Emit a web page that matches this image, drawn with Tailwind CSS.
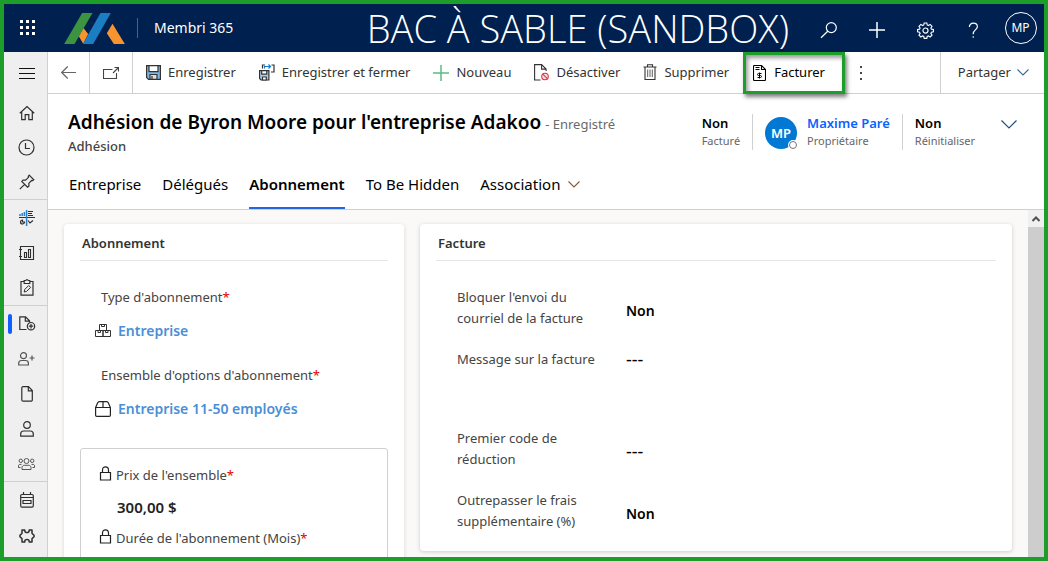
<!DOCTYPE html>
<html lang="fr">
<head>
<meta charset="utf-8">
<meta name="viewport" content="width=device-width, initial-scale=1">
<title>Membri 365</title>
<script src="https://cdn.jsdelivr.net/npm/@tailwindcss/browser@4"></script>
</head>
<body class="flex h-screen flex-col overflow-hidden border-4 border-[#1d9e2a] bg-white font-['Segoe_UI','Noto_Sans',sans-serif] text-[13px] text-[#333333]">

<header class="flex h-12 shrink-0 items-center bg-[#00204f] text-white">
  <button class="flex h-12 w-12 items-center justify-center" aria-label="Applications">
    <svg width="16" height="16" viewBox="0 0 16 16" fill="currentColor"><path d="M0 0h3v3H0zM6 0h3v3H6zM12 0h3v3h-3zM0 6h3v3H0zM6 6h3v3H6zM12 6h3v3h-3zM0 12h3v3H0zM6 12h3v3H6zM12 12h3v3h-3z"/></svg>
  </button>
  <a href="#" class="ml-3" aria-label="Membri">
    <svg width="61" height="31" viewBox="192 37 182 93"><path fill="#f7942e" d="M236 107l14-25 14 18-15 29zM337 69l-17 29 21 32h33z"/><path fill="#3d9440" d="M246 37h31l-54 93h-31z"/><path fill="#1c7ec2" d="M301 37h31l-53 93h-31z"/></svg>
  </a>
  <span class="ml-3 h-5 w-px bg-[#4a6288]"></span>
  <span class="ml-4 text-sm whitespace-nowrap">Membri 365</span>
  <span class="min-w-0 flex-1 pr-4 text-right font-['Segoe_UI_Light','Open_Sans',sans-serif] text-[38px] leading-[48px] font-light whitespace-nowrap">BAC À SABLE (SANDBOX)</span>
  <button class="flex h-12 w-12 items-center justify-center" aria-label="Rechercher"><svg class="mt-1" width="18" height="18" viewBox="0 0 18 18" fill="none" stroke="currentColor" stroke-width="1.2"><circle cx="11.3" cy="6.6" r="5"/><path d="M7.7 10.2L1 16.8"/></svg></button>
  <button class="flex h-12 w-12 items-center justify-center" aria-label="Ajouter"><svg class="mt-1" width="16" height="16" viewBox="0 0 16 16" stroke="currentColor" stroke-width="1.5"><path d="M8 0v16M0 8h16"/></svg></button>
  <button class="flex h-12 w-12 items-center justify-center" aria-label="Paramètres"><svg class="mt-1" width="17" height="17" viewBox="0 0 18 18" fill="none" stroke="currentColor" stroke-width="1.2"><path d="M7.6 1h2.8l.4 2.1 1.3.6 1.8-1.2 2 2-1.2 1.8.6 1.3 2.1.4v2.4l-2.1.4-.6 1.3 1.2 1.8-2 2-1.8-1.2-1.3.6-.4 2.1H7.6l-.4-2.1-1.3-.6-1.8 1.2-2-2 1.2-1.8-.6-1.3L.6 10.400V8l2.100-.4.600-1.300L2.100 4.500l2-2 1.800 1.200 1.300-.6z"/><circle cx="9" cy="9.100" r="2.700"/></svg></button>
  <button class="flex h-12 w-12 items-center justify-center" aria-label="Aide"><svg class="mt-1" width="11" height="17" viewBox="0 0 12 18" fill="none" stroke="currentColor" stroke-width="1.300"><path d="M1.500 5.200C1.500 2.700 3.300 1 5.800 1s4.400 1.500 4.400 3.800c0 3.400-4.500 3.800-4.500 7.700v.5"/><path d="M5.700 15.200v1.800"/></svg></button>
  <button class="flex h-12 w-[47px] items-center justify-center" aria-label="Compte"><span class="flex h-8 w-8 items-center justify-center rounded-full border border-white text-xs">MP</span></button>
</header>

<div class="flex min-h-0 flex-1">
  <nav class="flex w-11 shrink-0 flex-col border-r border-[#d2d0ce] bg-[#efefef] text-[#2f2f2f]" aria-label="Navigation">
    <button class="flex h-[44px] shrink-0 items-center justify-center pb-0.5 pl-0.5" aria-label="Menu"><svg width="16" height="11" viewBox="0 0 16 11" stroke="#111" stroke-width="1"><path d="M0 .5h16M0 5.500h16M0 10.500h16"/></svg></button>
    <div class="border-b border-[#d2d0ce] pl-0.5">
      <a href="#" class="flex h-[34px] items-center justify-center" aria-label="Accueil"><svg width="16" height="16" viewBox="0 0 16 16" fill="none" stroke="currentColor" stroke-width="1.200"><path d="M.8 8.200L8 1.500l7.200 6.700M2.700 6.800v7.900h3.500V9.600h3.600v5.100h3.500V6.800"/></svg></a>
      <a href="#" class="flex h-[35px] items-center justify-center" aria-label="Récents"><svg width="17" height="17" viewBox="0 0 17 17" fill="none" stroke="currentColor" stroke-width="1.200"><circle cx="8.500" cy="8.500" r="7.500"/><path d="M7.500 4v5.500H12"/></svg></a>
      <a href="#" class="flex h-[34px] items-center justify-center" aria-label="Épinglés"><svg width="16" height="16" viewBox="0 0 16 16" fill="none" stroke="currentColor" stroke-width="1.200"><path d="M10.200 1.200l4.600 4.600-1.200.9-1-.2-2.800 2.900.2 2.600-1.500 1.200L2.800 7.500 4 6l2.600.2 2.900-2.800-.2-1zM5.600 10.400L.8 15.200"/></svg></a>
    </div>
    <div class="border-b border-[#d2d0ce] pl-0.5">
      <a href="#" class="flex h-[35px] items-center justify-center" aria-label="Tableaux de bord"><svg width="16" height="16" viewBox="0 0 16 16" fill="none" stroke="currentColor" stroke-width="1.200"><path d="M0 7.500h16M9 1.500h5M9 3.500h4M9 5.500h5M3.500 10a2 2 0 1 0 2 2h-2zM9 10.500l2 2.500 3-2.500"/><path stroke="#2f7fc4" stroke-width="1.500" d="M1 6V4M3.200 6V3M5.400 6V2M7.600 0v16"/></svg></a>
      <a href="#" class="flex h-[35px] items-center justify-center" aria-label="Rapports"><svg width="16" height="16" viewBox="0 0 16 16" fill="none" stroke="currentColor" stroke-width="1.100"><path d="M1.500 1.500h13v13h-13zM0 4.500h3M0 11.500h3M5.500 7.500h2v5h-2zM9.500 4.500h2v8h-2z"/></svg></a>
      <a href="#" class="flex h-[35px] items-center justify-center" aria-label="Formulaires"><svg width="14" height="17" viewBox="0 0 14 17" fill="none" stroke="currentColor" stroke-width="1.200"><path d="M4 2.500H1v13.700h12V2.500h-3M4.200 4.500v-3h1.500L7 .6l1.300.9h1.500v3z"/><path stroke-width="1" d="M4.200 13l.5-2.500 4-4 1.900 1.900-4 4z"/></svg></a>
    </div>
    <div class="border-b border-[#d2d0ce] pl-0.5">
      <a href="#" aria-current="page" class="relative flex h-[35px] items-center justify-center" aria-label="Adhésions"><span class="absolute top-2 left-0.5 h-5 w-1 rounded-full bg-[#0b62ff]"></span><svg class="ml-px" width="17" height="15" viewBox="0 0 17 15" fill="none" stroke="currentColor" stroke-width="1.200"><path d="M7.500 13.500h-6.700V.8h5.700l4 4v1.500M6.300.8v4.400h4.200"/><circle cx="12" cy="10.200" r="3.700"/><path d="M12 8v4.400M9.800 10.200h4.400"/></svg></a>
      <a href="#" class="flex h-[35px] items-center justify-center" aria-label="Nouveaux membres"><svg width="17" height="14" viewBox="0 0 17 14" fill="none" stroke="#555" stroke-width="1.200"><circle cx="5.500" cy="3.700" r="3"/><path d="M.7 13v-1.700C.7 9.500 2 8.500 3.500 8.500h4c1.500 0 2.900 1 2.900 2.800V13zM14 3.500v5M11.500 6h5"/></svg></a>
      <a href="#" class="flex h-[35px] items-center justify-center" aria-label="Documents"><svg width="12" height="16" viewBox="0 0 12 16" fill="none" stroke="currentColor" stroke-width="1.200"><path d="M2 .7h5.500l3.800 3.800V14a1.200 1.200 0 0 1-1.200 1.200H2A1.200 1.200 0 0 1 .8 14V2A1.200 1.200 0 0 1 2 .7zM7.300.8v4h4"/></svg></a>
      <a href="#" class="flex h-[35px] items-center justify-center" aria-label="Contacts"><svg width="14" height="16" viewBox="0 0 14 16" fill="none" stroke="currentColor" stroke-width="1.200"><circle cx="7" cy="4" r="3.300"/><path d="M.7 15.200V13c0-1.800 1.300-3 3-3h6.600c1.700 0 3 1.200 3 3v2.200z"/></svg></a>
      <a href="#" class="flex h-[35px] items-center justify-center" aria-label="Groupes"><svg width="17" height="12" viewBox="0 0 17 12" fill="none" stroke="#555" stroke-width="1"><circle cx="8.500" cy="3" r="2.500"/><circle cx="2.800" cy="2.800" r="1.700"/><circle cx="14.200" cy="2.800" r="1.700"/><path d="M4 11.500V9.600c0-1.300.9-2.300 2.300-2.300h4.400c1.400 0 2.300 1 2.300 2.300v1.900zM3.500 6.400H2C1 6.400.5 7 .5 8v1.500h2M13.500 6.400H15c1 0 1.500.6 1.500 1.600v1.500h-2"/></svg></a>
    </div>
    <a href="#" class="flex h-[36px] shrink-0 items-center justify-center pl-0.5" aria-label="Calendrier"><svg width="14" height="16" viewBox="0 0 14 16" fill="none" stroke="currentColor" stroke-width="1.200"><path d="M2 2.500h10c.8 0 1.300.5 1.300 1.300v10c0 .9-.5 1.400-1.300 1.400H2c-.8 0-1.300-.5-1.300-1.400v-10C.7 3 1.200 2.500 2 2.500zM3.500 0v2.500M10.500 0v2.500M.7 5.500h12.600M3 8.500h8v3H3z"/></svg></a>
    <a href="#" class="flex h-[35px] shrink-0 items-center justify-center pl-0.5" aria-label="Extensions"><svg width="16" height="14" viewBox="0 0 16 14" fill="none" stroke="currentColor" stroke-width="1.500" stroke-linejoin="round"><path d="M3 1h2.800c-.2 1.800.8 2.600 2.200 2.600s2.400-.8 2.200-2.600H13v3.200c0 .8 2.200 1.300 2.200 2.800S13 9 13 9.800V13h-2.800c.2-1.800-.8-2.600-2.200-2.600s-2.400.8-2.200 2.600H3V9.800C3 9 .8 8.500.8 7S3 5 3 4.200z"/></svg></a>
  </nav>

  <main class="flex min-w-0 flex-1 flex-col">
    <div class="flex h-[42px] shrink-0 items-stretch border-b border-[#d2d0ce] whitespace-nowrap" role="toolbar">
      <button class="flex w-[42px] items-center justify-center border-r border-[#d2d0ce]" aria-label="Retour"><svg width="15" height="13" viewBox="0 0 15 13" fill="none" stroke="#666" stroke-width="1.200"><path d="M6.700.5l-6 6 6 6M.7 6.500H15"/></svg></button>
      <button class="flex w-[43px] items-center justify-center border-r border-[#d2d0ce]" aria-label="Ouvrir"><svg width="16" height="12" viewBox="0 0 16 12" fill="none" stroke="#444" stroke-width="1.100"><path d="M9.500 2.500h-9v9h13V6M10 6l5-5M11.500.5h4v4"/></svg></button>
      <button class="ml-1 flex items-center gap-[7px] px-[9px]"><svg width="15" height="15" viewBox="0 0 15 15" stroke="#333" stroke-width="1.200"><path fill="#7db9e8" d="M.6.6h13.800v13.800H2.600l-2-2z"/><path fill="#fff" d="M3 .6h9v6H3z"/><path fill="#ddd" d="M4 9.500h7v4.900H4zM6 11v3"/></svg>Enregistrer</button>
      <button class="ml-[5px] flex items-center gap-[7px] px-[9px]"><svg width="16" height="17" viewBox="0 0 16 17" fill="none" stroke="#333" stroke-width="1.200"><path fill="#a9cdea" d="M.6 6.600h9.300v9.400H2L.6 14.500z"/><path fill="#fff" d="M2.700 6.600h5.100v3.600H2.700zM3.500 13h3.800v3H3.500z"/><path d="M3.500 4.500V1H6M12.500 1H15v7h-3"/><path stroke="#1779cf" d="M5.500 4.500v-2h6M9.500.5l2 2-2 2"/></svg>Enregistrer et fermer</button>
      <button class="ml-[5px] flex items-center gap-[7px] px-[9px]"><svg width="16" height="16" viewBox="0 0 16 16" stroke="#5dbb83" stroke-width="1.500"><path d="M8 0v16M0 8h16"/></svg>Nouveau</button>
      <button class="ml-[5px] flex items-center gap-[7px] px-[9px]"><svg width="15" height="17" viewBox="0 0 15 17" fill="none" stroke="#333" stroke-width="1.100"><path d="M6.500 16H.6V.6h7l4.500 4.500V7M7.600.6v4.500h4.500"/><g stroke="#dd3444"><circle cx="11" cy="12.500" r="3.300" fill="#fbdfe1"/><path d="M8.800 10.200l4.500 4.500"/></g></svg>Désactiver</button>
      <button class="ml-[5px] flex items-center gap-[7px] px-[9px]"><svg width="14" height="17" viewBox="0 0 14 17" fill="none" stroke="#333" stroke-width="1.100"><path d="M.5 3h13M4.500 3V.8h5V3M2 3v12.500h10V3"/><path stroke-width=".8" d="M4.700 5.500v7.500M7 5.500v7.500M9.300 5.500v7.500"/></svg>Supprimer</button>
      <button class="relative ml-[5px] flex items-center gap-2 pr-5 pl-[10px] text-black"><span class="absolute inset-x-0 top-0 h-[42px] border-[3px] border-[#1d9e2a] shadow-[2px_3px_4px_rgba(0,0,0,0.5),inset_2px_3px_4px_rgba(0,0,0,0.4)]"></span><svg width="13" height="16" viewBox="0 0 13 16" fill="none" stroke="#000" stroke-width="1.100"><path d="M1.500.5h7l4 4v10c0 .7-.4 1-1 1h-10c-.7 0-1-.3-1-1v-13c0-.6.300-1 1-1zM8.500.5v4h4M2.500 2.500h4M2.500 4.500h4"/><path stroke-width="1" d="M8.500 8.500h-3c-1.300 0-1.300 2 0 2h2c1.300 0 1.300 2 0 2h-3M6.500 7.500v6"/></svg><span class="relative">Facturer</span></button>
      <button class="ml-1.5 flex w-5 items-center justify-center" aria-label="Plus de commandes"><svg width="2" height="14" viewBox="0 0 2 14" fill="#444"><path d="M0 0h2v2H0zM0 6h2v2H0zM0 12h2v2H0z"/></svg></button>
      <button class="ml-auto flex items-center gap-1.5 border-l border-[#d2d0ce] pr-[15px] pl-[17px]">Partager<svg width="12" height="7" viewBox="0 0 12 7" fill="none" stroke="#3a6c99" stroke-width="1.100"><path d="M.5.5L6 6 11.500.5"/></svg></button>
    </div>

    <section class="shrink-0 border-b border-[#d2d0ce] bg-white pl-5">
      <div class="flex h-[72px] items-start pt-[15px]">
        <div class="min-w-0 flex-1 whitespace-nowrap">
          <div class="flex items-baseline gap-1"><h1 class="text-[19px] leading-[26px] font-semibold text-black">Adhésion de Byron Moore pour l'entreprise Adakoo</h1><span class="text-[#6a6a6a]">- Enregistré</span></div>
          <p class="text-[13px] leading-[22px] font-medium text-[#444]">Adhésion</p>
        </div>
        <div class="mt-[5px] flex whitespace-nowrap">
          <div class="border-r border-[#d2d0ce] pr-3 leading-[18px]"><p class="font-semibold text-black">Non</p><p class="text-[11px] leading-[18px] text-[#666]">Facturé</p></div>
          <div class="flex gap-2.5 border-r border-[#d2d0ce] px-3 leading-[18px]">
            <span class="relative mt-[3px] flex h-8 w-8 items-center justify-center rounded-full bg-[#0078d4] font-semibold text-white">MP<span class="absolute right-0 bottom-0 h-2 w-2 rounded-full border border-[#777] bg-white ring-1 ring-white"></span></span>
            <div><a href="#" class="block font-semibold text-[#0b62ff]">Maxime Paré</a><p class="text-[11px] leading-[18px] text-[#666]">Propriétaire</p></div>
          </div>
          <div class="pl-3 leading-[18px]"><p class="font-semibold text-black">Non</p><p class="text-[11px] leading-[18px] text-[#666]">Réinitialiser</p></div>
        </div>
        <button class="mt-[11px] mr-[27px] ml-[26px]" aria-label="Développer"><svg width="16" height="9" viewBox="0 0 16 9" fill="none" stroke="#234f80" stroke-width="1.200"><path d="M.5.5L8 8 15.500.5"/></svg></button>
      </div>
      <div class="flex h-[43px] gap-[21px] pl-px text-[15px] whitespace-nowrap text-black" role="tablist">
        <button role="tab" class="border-b-2 border-transparent pb-1">Entreprise</button>
        <button role="tab" class="border-b-2 border-transparent pb-1">Délégués</button>
        <button role="tab" aria-selected="true" class="border-b-2 border-[#2266e3] pb-1 font-semibold">Abonnement</button>
        <button role="tab" class="border-b-2 border-transparent pb-1">To Be Hidden</button>
        <button role="tab" class="flex items-center gap-2 border-b-2 border-transparent pb-1">Association<svg width="12" height="7" viewBox="0 0 12 7" fill="none" stroke="#8a5a30" stroke-width="1.100"><path d="M.5.5L6 6 11.500.5"/></svg></button>
      </div>
    </section>

    <div class="flex min-h-0 flex-1 bg-[#faf9f8]">
      <div class="flex min-w-0 flex-1 items-start gap-4 overflow-hidden px-4 pt-3.5">
        <section class="w-[340px] shrink-0 rounded bg-white px-4 pb-8 shadow-[0_1px_4px_rgba(0,0,0,0.14)]">
          <h2 class="h-[37px] border-b border-[#e6e6e6] pl-0.5 leading-[38px] font-semibold">Abonnement</h2>
          <div class="flex flex-col pt-6">
            <p class="pl-[21px] leading-6 text-[#444]">Type d'abonnement<span class="text-[#e00000]">*</span></p>
            <a href="#" class="mt-2.5 flex items-center gap-[7px] pl-[15px] text-sm leading-6 font-semibold text-[#4a8fd6]"><svg width="16" height="14" viewBox="0 0 16 14" fill="none" stroke="#333" stroke-width="1"><path d="M4.500.5h7v6h-7zM.5 6.500H8v6H.5zM8 6.500h7.500v6H8zM6.500.5v2h3v-2M3 6.500v2h2.500v-2M10.500 6.500v2H13v-2"/></svg>Entreprise</a>
            <p class="mt-5 pl-[21px] leading-6 text-[#444]">Ensemble d'options d'abonnement<span class="text-[#e00000]">*</span></p>
            <a href="#" class="mt-2.5 flex items-center gap-[7px] pl-[15px] text-sm leading-6 font-semibold text-[#4a8fd6]"><svg width="16" height="16" viewBox="0 0 16 16" fill="none" stroke="#222" stroke-width="1.200"><path d="M.6 6.500l2-4.600C3 1 3.500.6 4.300.6h7.400c.8 0 1.300.4 1.700 1.300l2 4.600v7.700c0 .8-.4 1.200-1.200 1.200H1.800c-.8 0-1.200-.4-1.200-1.200zM.6 6.500h14.800M8 .6v5.900"/></svg>Entreprise 11-50 employés</a>
          </div>
          <div class="mt-[27px] flex flex-col rounded-[3px] border border-[#d2d0ce] px-[18px] pt-3.5 pb-8">
            <p class="flex items-center gap-1 leading-6 text-[#444]"><svg class="-mt-1" width="13" height="15" viewBox="0 0 13 15" fill="none" stroke="#222" stroke-width="1.200"><path d="M1.500 6.500h10v7.500h-10zM3.500 6.500V4C3.500 2 4.700.8 6.500.8S9.500 2 9.500 4v2.500"/></svg><span>Prix de l'ensemble<span class="text-[#e00000]">*</span></span></p>
            <p class="mt-2 pl-[18px] text-[15px] leading-6 font-semibold text-[#222]">300,00 $</p>
            <p class="mt-[7px] flex items-center gap-1 leading-6 text-[#444]"><svg class="-mt-1" width="13" height="15" viewBox="0 0 13 15" fill="none" stroke="#222" stroke-width="1.200"><path d="M1.500 6.500h10v7.500h-10zM3.500 6.500V4C3.500 2 4.700.8 6.500.8S9.500 2 9.500 4v2.500"/></svg><span>Durée de l'abonnement (Mois)<span class="text-[#e00000]">*</span></span></p>
          </div>
        </section>

        <section class="min-w-0 flex-1 rounded bg-white px-4 pb-[19px] shadow-[0_1px_4px_rgba(0,0,0,0.18)]">
          <h2 class="h-[37px] border-b border-[#e6e6e6] pl-0.5 leading-[38px] font-semibold">Facture</h2>
          <dl class="grid grid-cols-[148px_1fr] items-center gap-x-[21px] gap-y-5 pt-[26px] pl-[21px] leading-[21px]">
            <dt class="text-[#444]">Bloquer l'envoi du courriel de la facture</dt><dd class="pt-1 text-sm leading-[21px] font-semibold text-black">Non</dd>
            <dt class="mb-[38px] text-[#444]">Message sur la facture</dt><dd class="mb-[38px] text-lg leading-[21px] text-black">---</dd>
            <dt class="text-[#444]">Premier code de réduction</dt><dd class="pt-1 text-lg leading-[21px] text-black">---</dd>
            <dt class="text-[#444]">Outrepasser le frais supplémentaire (%)</dt><dd class="pt-1 text-sm leading-[21px] font-semibold text-black">Non</dd>
          </dl>
        </section>
      </div>
      <div class="flex w-4 shrink-0 flex-col bg-[#cdcdcd]" aria-hidden="true"><span class="flex h-[17px] items-center justify-center bg-[#f0f0f0]"><svg width="8" height="6" viewBox="0 0 8 6" fill="none" stroke="#505050" stroke-width="2"><path d="M.5 5L4 1.500 7.500 5"/></svg></span></div>
    </div>
  </main>
</div>
</body>
</html>
